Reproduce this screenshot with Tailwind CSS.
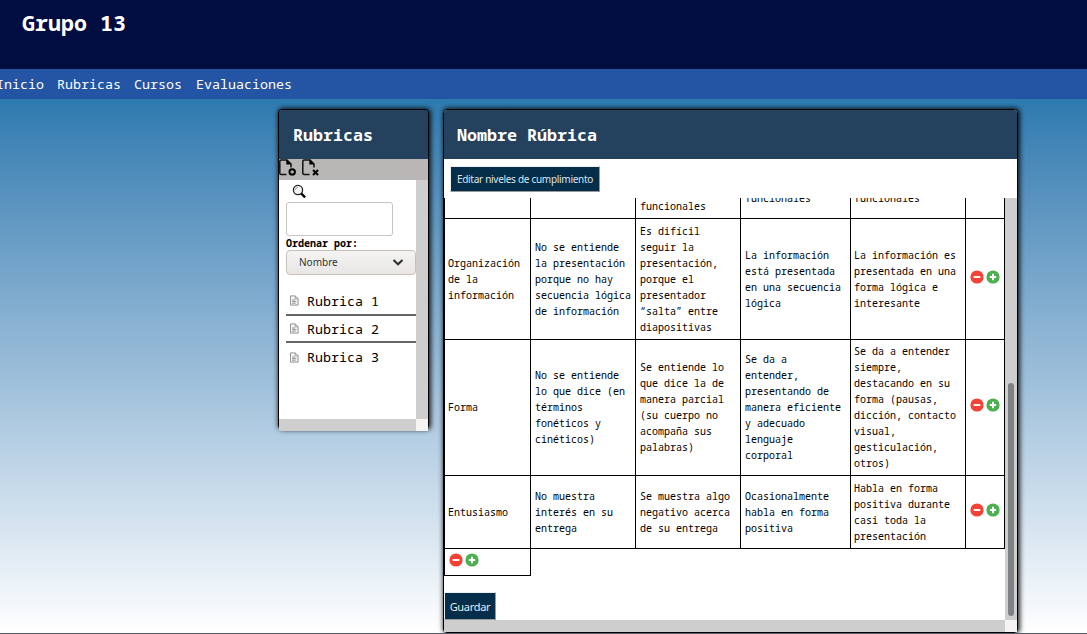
<!DOCTYPE html>
<html lang="es">
<head>
<meta charset="utf-8">
<title>Grupo 13</title>
<script src="https://cdn.jsdelivr.net/npm/@tailwindcss/browser@4"></script>
</head>
<body class="flex h-[634px] w-[1087px] flex-col overflow-hidden bg-white font-['Noto_Sans_Mono','DejaVu_Sans_Mono',monospace] text-black">
<svg class="hidden">
  <symbol id="minus" viewBox="0 0 14 14"><circle cx="7" cy="7" r="6.6" fill="#f44336"/><path d="M3.6 7h6.8" stroke="#fff" stroke-width="1.9"/></symbol>
  <symbol id="plus" viewBox="0 0 14 14"><circle cx="7" cy="7" r="6.6" fill="#4caf50"/><path d="M3.8 7h6.4M7 3.8v6.4" stroke="#fff" stroke-width="2"/></symbol>
  <symbol id="doc" viewBox="0 0 9 11"><path d="M.5.9h4.8l2.8 2.8v6.4H.5z" fill="#f6f6f6" stroke="#888" stroke-width=".9"/><path d="M5.2 1v2.8H8" fill="none" stroke="#888" stroke-width=".8"/><path d="M2.1 5h3M2.1 6.6h4.3M2.1 8.2h3.4" stroke="#777" stroke-width=".8"/></symbol>
  <symbol id="file" viewBox="0 0 18 18"><path d="M7.5 15.500H2.200Q.8 15.500 .8 14.200V2.200Q.8.9 2.200.9H8L12 5V8.500" fill="none" stroke="#111" stroke-width="1.500"/><path d="M7.300.5L12.700 5.500H7.300z" fill="#000"/></symbol>
</svg>
<header class="h-[69px] shrink-0 bg-[#010c40] pl-[22px] pt-[8px]"><h1 class="text-[21.67px] font-bold leading-[30px] text-white">Grupo 13</h1></header>
<nav class="flex h-[30px] shrink-0 gap-[13px] bg-[#2355a4] text-[13.333px] leading-[30px] text-white">
  <a class="-ml-1">Inicio</a><a>Rubricas</a><a>Cursos</a><a class="ml-px">Evaluaciones</a>
</nav>
<main class="flex h-[534px] shrink-0 items-start gap-[14px] bg-linear-to-b from-[#2d7aaf] to-white pl-[278px] pt-[10px]">
  <aside class="h-[320px] w-[151px] rounded-[4px] border border-b-0 border-black shadow-[1px_0_5px_1px_rgba(0,0,0,0.85)]">
    <h2 class="h-[49px] rounded-t-[3px] bg-[#24425e] pl-[14px] text-[16.667px] font-bold leading-[49px] text-white">Rubricas</h2>
    <div class="flex h-[21px] gap-[5px] bg-[#b8b7b5]">
      <svg class="h-[18px] w-[18px]" viewBox="0 0 18 18"><use href="#file"/><circle cx="13.200" cy="12.900" r="2.700" fill="none" stroke="#000" stroke-width="2"/></svg>
      <svg class="h-[18px] w-[18px]" viewBox="0 0 18 18"><use href="#file"/><path d="M11 11l5 5M16 11l-5 5" stroke="#000" stroke-width="2"/></svg>
    </div>
    <div class="grid h-[251px] w-[149px] grid-cols-[137px_12px] grid-rows-[239px_12px]">
      <div class="bg-white pl-[7px] pt-[4px]">
        <svg class="ml-[6px] h-[15px] w-[14px]" viewBox="0 0 14 15"><circle cx="6" cy="6" r="4.600" fill="#f5f5f5" stroke="#222" stroke-width="1.300"/><path d="M3.300 5.600Q3.800 3.500 5.800 3.300" fill="none" stroke="#888" stroke-width=".9"/><path d="M9.100 9.300l4 4" stroke="#000" stroke-width="2.400"/></svg>
        <div class="mt-[3px] h-[34px] w-[107px] rounded-[3px] border border-[#c8c4bf] bg-white"></div>
        <div class="h-[14px] text-[10px] font-bold leading-[15px]">Ordenar por:</div>
        <div class="flex h-[25px] w-[130px] items-center justify-between rounded-[4px] border border-[#c6c0ba] bg-linear-to-b from-[#f5f4f3] to-[#e9e7e5] pl-[12px] pr-[11px] font-['Noto_Sans',sans-serif] text-[10px] text-[#2e3436]">Nombre<svg class="h-[8px] w-[12px]" viewBox="0 0 12 8"><path d="M1.500 1L6 5.200L10.500 1" fill="none" stroke="#2e3436" stroke-width="2.200"/></svg></div>
        <ul class="mt-[12px] text-[13.333px]">
          <li class="flex h-[29px] items-center gap-[8px] border-b-2 border-[#666] pl-[4px]"><svg class="h-[11px] w-[9px]"><use href="#doc"/></svg><span class="pt-[2px]">Rubrica 1</span></li>
          <li class="flex h-[27px] items-center gap-[8px] border-b-2 border-[#666] pl-[4px]"><svg class="h-[11px] w-[9px]"><use href="#doc"/></svg><span class="pt-[2px]">Rubrica 2</span></li>
          <li class="flex h-[28px] items-center gap-[8px] pl-[4px]"><svg class="h-[11px] w-[9px]"><use href="#doc"/></svg><span class="pt-[2px]">Rubrica 3</span></li>
        </ul>
      </div>
      <div class="bg-[#cecece]"></div><div class="bg-[#cecece]"></div><div class="bg-[#f5f4f2]"></div>
    </div>
  </aside>
  <section class="h-[524px] w-[575px] rounded-[4px] border border-black bg-white shadow-[1px_0_5px_1px_rgba(0,0,0,0.85)]">
    <h2 class="h-[49px] rounded-t-[3px] bg-[#24425e] pl-[13px] text-[16.667px] font-bold leading-[49px] text-white">Nombre Rúbrica</h2>
    <div class="flex h-[39px] pl-[6px] pt-[7px]"><button class="h-[26px] w-[150px] border border-[#999] border-l-[#eee] border-t-[#eee] bg-[#052e4b] font-['Noto_Sans',sans-serif] text-[10px] tracking-[-0.29px] whitespace-nowrap text-[#dce4ea]">Editar niveles de cumplimiento</button></div>
    <div class="grid grid-cols-[561px_12px] grid-rows-[422px_12px]">
      <div class="overflow-hidden">
        <div class="grid w-[561px] grid-cols-[87px_105px_105px_110px_115px_39px] grid-rows-[21px_121px_136px_73px_27px] text-[10px] leading-[16px] whitespace-nowrap [&>div]:flex [&>div]:items-center [&>div]:border-r [&>div]:border-b [&>div]:border-black [&>div]:pl-[4px]">
          <div class="border-l"></div><div></div>
          <div class="overflow-hidden"><p class="-mt-[4px]">funcionales</p></div>
          <div class="overflow-hidden"><p class="-mt-[20px]">funcionales</p></div>
          <div class="overflow-hidden !pl-[3px]"><p class="-mt-[20px]">funcionales</p></div><div></div>

          <div class="border-l !pl-[3px]">Organización<br>de la<br>información</div>
          <div>No se entiende<br>la presentación<br>porque no hay<br>secuencia lógica<br>de información</div>
          <div>Es difícil<br>seguir la<br>presentación,<br>porque el<br>presentador<br>“salta” entre<br>diapositivas</div>
          <div>La información<br>está presentada<br>en una secuencia<br>lógica</div>
          <div class="!pl-[3px]">La información es<br>presentada en una<br>forma lógica e<br>interesante</div>
          <div class="gap-[2px] !pl-[4px] pb-[4px]"><svg class="h-[14px] w-[14px]"><use href="#minus"/></svg><svg class="h-[14px] w-[14px]"><use href="#plus"/></svg></div>

          <div class="border-l !pl-[3px] pb-[2px]">Forma</div>
          <div class="pb-[2px]">No se entiende<br>lo que dice (en<br>términos<br>fonéticos y<br>cinéticos)</div>
          <div class="pb-[2px]">Se entiende lo<br>que dice la de<br>manera parcial<br>(su cuerpo no<br>acompaña sus<br>palabras)</div>
          <div class="pb-[2px]">Se da a<br>entender,<br>presentando de<br>manera eficiente<br>y adecuado<br>lenguaje<br>corporal</div>
          <div class="!pl-[3px] pb-[2px]">Se da a entender<br>siempre,<br>destacando en su<br>forma (pausas,<br>dicción, contacto<br>visual,<br>gesticulación,<br>otros)</div>
          <div class="gap-[2px] !pl-[4px] pb-[5px]"><svg class="h-[14px] w-[14px]"><use href="#minus"/></svg><svg class="h-[14px] w-[14px]"><use href="#plus"/></svg></div>

          <div class="border-l !pl-[3px]">Entusiasmo</div>
          <div>No muestra<br>interés en su<br>entrega</div>
          <div>Se muestra algo<br>negativo acerca<br>de su entrega</div>
          <div>Ocasionalmente<br>habla en forma<br>positiva</div>
          <div class="!pl-[3px]">Habla en forma<br>positiva durante<br>casi toda la<br>presentación</div>
          <div class="gap-[2px] !pl-[4px] pb-[5px]"><svg class="h-[14px] w-[14px]"><use href="#minus"/></svg><svg class="h-[14px] w-[14px]"><use href="#plus"/></svg></div>

          <div class="gap-[2px] border-l pb-[4px]"><svg class="h-[14px] w-[14px]"><use href="#minus"/></svg><svg class="h-[14px] w-[14px]"><use href="#plus"/></svg></div>
        </div>
        <button class="mt-[16px] block h-[28px] w-[52px] border border-[#999] border-l-[#eee] border-t-[#eee] bg-[#052e4b] pt-[2px] font-['Noto_Sans',sans-serif] text-[11px] tracking-[-0.3px] text-[#e6ecf0]">Guardar</button>
      </div>
      <div class="bg-[#cecece] px-[3px] pt-[185px]"><div class="h-[233px] w-[6px] rounded-full bg-[#7f8283]"></div></div>
      <div class="bg-[#cecece]"></div><div class="bg-[#f5f4f2]"></div>
    </div>
  </section>
</main>
<footer class="h-px shrink-0 bg-[#555c6b]"></footer>
</body>
</html>
